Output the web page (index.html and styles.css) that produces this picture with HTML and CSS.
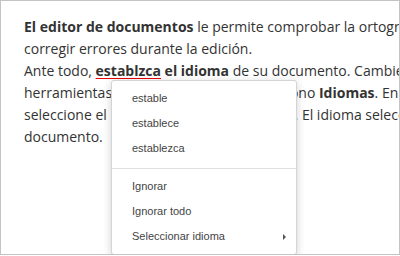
FILE: index.html
```html
<!DOCTYPE html>
<html lang="es">
<head>
    <meta charset="UTF-8">
    <title>Revisión ortográfica</title>
    <link rel="stylesheet" href="styles.css">
</head>
<body>

    <!-- Document area -->
    <div class="page">
        <div class="doc-text">
            <p><b>El editor de documentos</b> le permite comprobar la ortografía y<br>corregir errores durante la edición.</p>
            <p>Ante todo, <b><span class="misspelled">establzca</span> el idioma</b> de su documento. Cambie a la pestaña<br>herramientas superior y haga clic en el icono <b>Idiomas</b>. En la ventana<br>seleccione el idioma necesario y pulse OK. El idioma seleccionado<br>documento.</p>
        </div>

        <!-- Spelling context menu -->
        <ul class="context-menu">
            <li>estable</li>
            <li>establece</li>
            <li>establezca</li>
            <li class="divider"></li>
            <li>Ignorar</li>
            <li>Ignorar todo</li>
            <li class="has-sub">Seleccionar idioma</li>
        </ul>
    </div>

</body>
</html>
```

FILE: styles.css
```css
body {
    margin: 0;
    background-color: #fff;
}

.page {
    position: relative;
    width: 398px;
    height: 253px;
    border: 1px solid #c4c4c4;
    overflow: hidden;
    background-color: #fff;
}

.doc-text {
    padding: 15px 0 0 23px;
    font-family: "Open Sans", sans-serif;
    font-size: 14px;
    line-height: 22px;
    color: #333;
    white-space: nowrap;
}

.doc-text p {
    margin: 0;
}

.doc-text b {
    font-weight: bold;
}

.misspelled {
    text-decoration: underline solid #e00 1px;
    text-underline-offset: 2px;
}

.context-menu {
    position: absolute;
    left: 110px;
    top: 79px;
    width: 184px;
    margin: 0;
    padding: 5px 0;
    list-style: none;
    background-color: #fff;
    border: 1px solid #d4d4d4;
    border-radius: 3px;
    box-shadow: 0 2px 8px rgba(0, 0, 0, 0.18);
    font-family: "Liberation Sans", Arial, sans-serif;
    font-size: 11px;
    color: #444;
}

.context-menu li {
    height: 25px;
    line-height: 25px;
    padding: 0 20px;
    position: relative;
}

.context-menu li.divider {
    height: 1px;
    margin: 7px 0 5px;
    padding: 0;
    background-color: #e0e0e0;
}

.context-menu li.has-sub::after {
    content: "";
    position: absolute;
    right: 10px;
    top: 10px;
    border-left: 3px solid #555;
    border-top: 3px solid transparent;
    border-bottom: 3px solid transparent;
}
```
